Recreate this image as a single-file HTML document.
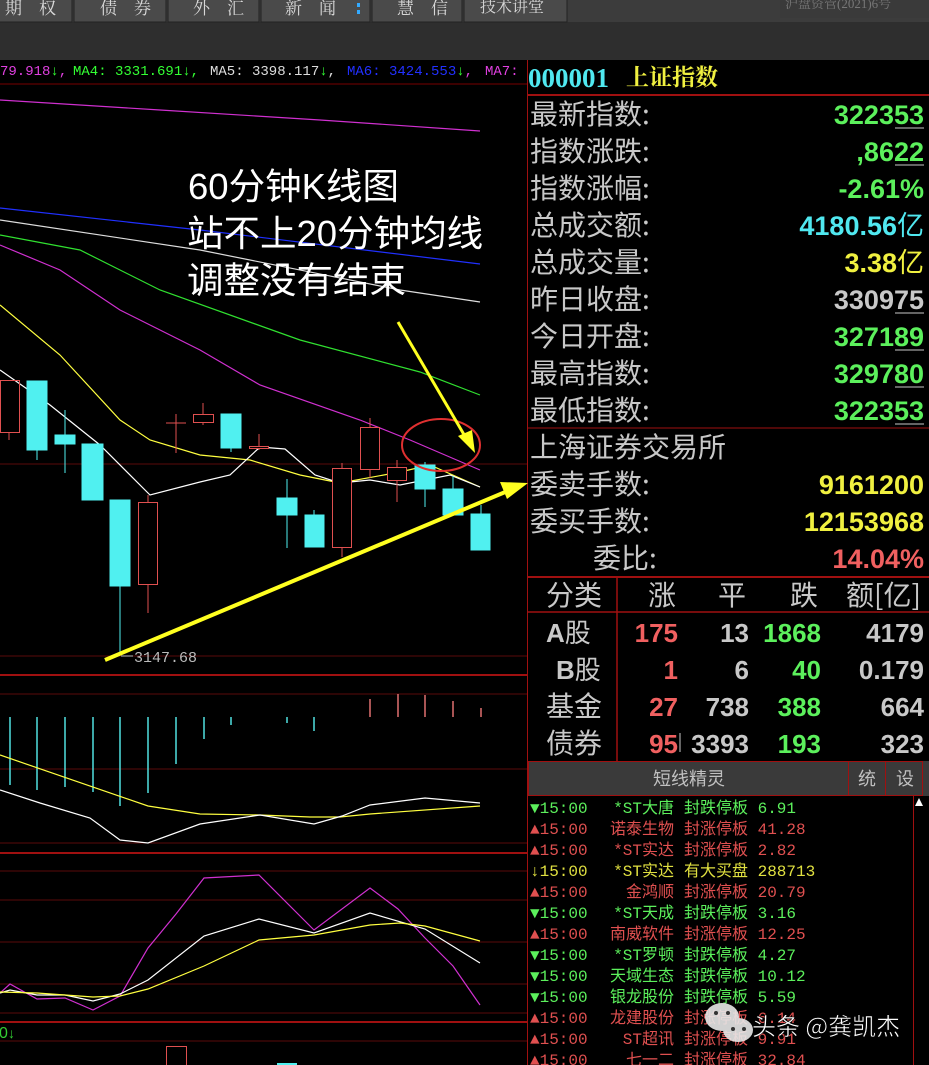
<!DOCTYPE html>
<html><head><meta charset="utf-8"><style>
html,body{margin:0;padding:0;background:#000;width:929px;height:1065px;overflow:hidden}
svg{display:block}
</style></head><body>
<svg width="929" height="1065" xmlns="http://www.w3.org/2000/svg" font-family="'Liberation Sans','WenQuanYi Zen Hei',sans-serif">
<rect width="929" height="1065" fill="#000"/>
<!-- top bar -->
<rect x="0" y="0" width="929" height="22" fill="#3c3c3c"/>
<rect x="0" y="22" width="929" height="38" fill="#2e2e2e"/>
<g fill="#4a4a4a" stroke="#222">
<rect x="-2" y="-2" width="74" height="24"/><rect x="74" y="-2" width="92" height="24"/><rect x="168" y="-2" width="91" height="24"/>
<rect x="261" y="-2" width="109" height="24"/><rect x="372" y="-2" width="90" height="24"/><rect x="464" y="-2" width="103" height="24"/>
</g>
<rect x="780" y="-2" width="149" height="20" fill="#3a3a3a"/>
<g fill="#d8d8d8" font-size="17" font-family="'Liberation Serif','Noto Serif CJK SC',serif">
<text x="5" y="14">期　权</text><text x="100" y="14">债　券</text><text x="193" y="14">外　汇</text>
<text x="285" y="14">新　闻</text><text x="397" y="14">慧　信</text><text x="480" y="12" font-size="16">技术讲堂</text>
<text x="785" y="8" font-size="13" fill="#777">沪盘资管(2021)6号</text>
</g>
<rect x="357" y="3" width="3" height="4" fill="#3af"/><rect x="357" y="10" width="3" height="4" fill="#3af"/>
<!-- MA legend -->
<g font-family="'Liberation Mono',monospace" font-size="14">
<text x="0" y="75" fill="#e040e0">79.918<tspan fill="#3f3">↓</tspan>,</text>
<text x="73" y="75" fill="#3f3">MA4: 3331.691↓,</text>
<text x="210" y="75" fill="#ddd">MA5: 3398.117<tspan fill="#3f3">↓</tspan>,</text>
<text x="347" y="75" fill="#2230ff">MA6: 3424.553<tspan fill="#3f3">↓</tspan><tspan fill="#e040e0">,</tspan></text>
<text x="485" y="75" fill="#e040e0">MA7:</text>
</g>
<line x1="0" y1="84" x2="528" y2="84" stroke="#700" />
<!-- grid lines -->
<g stroke="#5a0a0a" stroke-width="1">
<line x1="0" y1="464" x2="528" y2="464"/><line x1="0" y1="656" x2="528" y2="656"/>
<line x1="0" y1="694" x2="528" y2="694"/><line x1="0" y1="769" x2="528" y2="769"/><line x1="0" y1="843" x2="528" y2="843"/>
<line x1="0" y1="871" x2="528" y2="871"/><line x1="0" y1="900" x2="528" y2="900"/><line x1="0" y1="942" x2="528" y2="942"/>
<line x1="0" y1="984" x2="528" y2="984"/><line x1="0" y1="1013" x2="528" y2="1013"/><line x1="0" y1="1041" x2="528" y2="1041"/>
</g>
<g stroke="#a01010" stroke-width="2">
<line x1="0" y1="675" x2="528" y2="675"/><line x1="0" y1="853" x2="528" y2="853"/><line x1="0" y1="1022" x2="528" y2="1022"/>
</g>
<line x1="527.5" y1="60" x2="527.5" y2="1065" stroke="#a01010"/>
<!-- MA lines -->
<g fill="none" stroke-width="1.2">
<polyline stroke="#d030d0" points="0,100 160,110 320,120 480,131"/>
<polyline stroke="#2030ff" points="0,208 200,230 480,264"/>
<polyline stroke="#ddd" points="0,220 200,250 400,290 480,302"/>
<polyline stroke="#30e030" points="0,235 80,250 160,290 300,340 420,372 480,395"/>
<polyline stroke="#d030d0" points="0,245 60,270 120,310 200,350 260,385 360,420 410,440 480,470"/>
<polyline stroke="#ffff40" points="0,305 60,355 120,420 150,440 200,455 250,460 300,475 340,483 400,472 430,465 480,487"/>
<polyline stroke="#fff" points="0,370 50,405 100,445 150,495 200,482 230,475 260,447 285,449 315,475 340,483 370,480 400,485 450,475 480,487"/>
</g>
<!-- candles -->
<g stroke="#e05050" fill="none">
<line x1="9" y1="432" x2="9" y2="440"/><rect x="0.5" y="380.5" width="19" height="52"/>
<line x1="148" y1="495" x2="148" y2="613"/><rect x="138.5" y="502.5" width="19" height="82" fill="#000"/>
<line x1="176" y1="414" x2="176" y2="453"/><line x1="166" y1="423" x2="186" y2="423"/>
<line x1="203" y1="403" x2="203" y2="425"/><rect x="193.5" y="414.5" width="20" height="8" fill="#000"/>
<line x1="259" y1="434" x2="259" y2="450"/><rect x="249.5" y="446.5" width="19" height="2" fill="#000"/>
<line x1="342" y1="463" x2="342" y2="557"/><rect x="332.5" y="468.5" width="19" height="79" fill="#000"/>
<line x1="370" y1="418" x2="370" y2="478"/><rect x="360.5" y="427.5" width="19" height="42" fill="#000"/>
<line x1="397" y1="460" x2="397" y2="502"/><rect x="387.5" y="467.5" width="19" height="13" fill="#000"/>
</g>
<g stroke="#50f0f0" fill="#50f0f0">
<line x1="37" y1="381" x2="37" y2="460"/><rect x="27" y="381" width="20" height="69"/>
<line x1="65" y1="410" x2="65" y2="473"/><rect x="55" y="435" width="20" height="9"/>
<line x1="93" y1="444" x2="93" y2="500"/><rect x="82" y="444" width="21" height="56"/>
<line x1="120" y1="500" x2="120" y2="655"/><rect x="110" y="500" width="20" height="86"/>
<line x1="231" y1="414" x2="231" y2="452"/><rect x="221" y="414" width="20" height="34"/>
<line x1="287" y1="479" x2="287" y2="548"/><rect x="277" y="498" width="20" height="17"/>
<line x1="314" y1="510" x2="314" y2="547"/><rect x="305" y="515" width="19" height="32"/>
<line x1="425" y1="462" x2="425" y2="507"/><rect x="415" y="465" width="20" height="24"/>
<line x1="453" y1="476" x2="453" y2="515"/><rect x="443" y="489" width="20" height="26"/>
<line x1="481" y1="505" x2="481" y2="550"/><rect x="471" y="514" width="19" height="36"/>
</g>
<text x="134" y="662" fill="#bbb" font-size="15" font-family="'Liberation Mono',monospace">3147.68</text>
<line x1="121" y1="656" x2="133" y2="656" stroke="#bbb"/>
<!-- annotations -->
<ellipse cx="441" cy="445" rx="39" ry="26" fill="none" stroke="#e03030" stroke-width="2"/>
<line x1="398" y1="322" x2="466" y2="438" stroke="#ffff20" stroke-width="3"/>
<polygon points="475,453 458,436 472,430" fill="#ffff20"/>
<line x1="105" y1="660" x2="510" y2="490" stroke="#ffff20" stroke-width="4"/>
<polygon points="528,483 500,482 507,499" fill="#ffff20"/>
<g fill="#fff" font-size="36.5" font-family="'Liberation Sans','Noto Sans CJK SC',sans-serif">
<text x="188" y="199">60分钟K线图</text><text x="187" y="246">站不上20分钟均线</text><text x="187" y="293">调整没有结束</text>
</g>
<!-- MACD -->
<g stroke="#50e0e0" stroke-width="1.5">
<line x1="10" y1="717" x2="10" y2="785"/><line x1="37" y1="717" x2="37" y2="790"/><line x1="65" y1="717" x2="65" y2="787"/>
<line x1="93" y1="717" x2="93" y2="792"/><line x1="120" y1="717" x2="120" y2="806"/><line x1="148" y1="717" x2="148" y2="793"/>
<line x1="176" y1="717" x2="176" y2="764"/><line x1="204" y1="717" x2="204" y2="739"/><line x1="231" y1="717" x2="231" y2="725"/>
<line x1="287" y1="717" x2="287" y2="723"/><line x1="314" y1="717" x2="314" y2="731"/>
</g>
<g stroke="#e07070" stroke-width="1.5">
<line x1="370" y1="717" x2="370" y2="699"/><line x1="398" y1="717" x2="398" y2="694"/><line x1="425" y1="717" x2="425" y2="695"/>
<line x1="453" y1="717" x2="453" y2="701"/><line x1="481" y1="717" x2="481" y2="708"/>
</g>
<g fill="none" stroke-width="1.2">
<polyline stroke="#ffff40" points="0,755 148,806 200,814 260,815 310,817 340,817 370,814 480,806"/>
<polyline stroke="#fff" points="0,790 40,803 90,818 120,840 148,843 200,824 260,815 314,824 342,816 370,805 425,798 480,803"/>
<polyline stroke="#d030d0" points="0,993 10,984 37,999 65,998 93,1010 120,996 148,948 176,914 204,878 259,875 314,930 370,888 398,909 425,938 453,966 480,1005"/>
<polyline stroke="#fff" points="0,993 10,990 37,995 65,995 93,1001 120,994 148,980 204,936 259,919 314,933 370,913 425,929 480,963"/>
<polyline stroke="#ffff40" points="0,992 37,993 93,997 120,996 148,989 204,966 259,940 314,935 370,925 400,923 425,926 480,941"/>
</g>
<text x="-1" y="1038" fill="#3c3" font-size="16">0</text><text x="8" y="1038" fill="#3c3" font-size="14">↓</text>
<rect x="166.5" y="1046.5" width="20" height="20" fill="none" stroke="#e05050"/>
<rect x="277" y="1063" width="20" height="2" fill="#50f0f0"/>

<!-- RIGHT PANEL -->
<text x="528" y="87" fill="#50e8f0" font-size="27" font-weight="bold" font-family="'Liberation Serif',serif">000001</text>
<text x="626" y="85" fill="#f0f040" font-size="23" font-weight="bold" font-family="'Liberation Serif','Noto Serif CJK SC',serif">上证指数</text>
<line x1="528" y1="95" x2="929" y2="95" stroke="#a01010" stroke-width="2"/>
<g fill="#c8c8c8" font-size="28" font-family="'WenQuanYi Zen Hei','Noto Sans CJK SC',sans-serif">
<text x="530" y="124">最新指数:</text><text x="530" y="161">指数涨跌:</text><text x="530" y="198">指数涨幅:</text>
<text x="530" y="235">总成交额:</text><text x="530" y="272">总成交量:</text><text x="530" y="309">昨日收盘:</text>
<text x="530" y="346">今日开盘:</text><text x="530" y="383">最高指数:</text><text x="530" y="420">最低指数:</text>
<text x="530" y="457">上海证券交易所</text><text x="530" y="494">委卖手数:</text><text x="530" y="531">委买手数:</text>
<text x="593" y="568">委比:</text>
</g>
<line x1="528" y1="428" x2="929" y2="428" stroke="#a01010"/>
<g font-size="27" font-weight="bold" text-anchor="end" font-family="'Liberation Sans','WenQuanYi Zen Hei',sans-serif">
<text x="924" y="124" fill="#5cf05c">322353</text>
<text x="924" y="161" fill="#5cf05c">,8622</text>
<text x="924" y="198" fill="#5cf05c">-2.61%</text>
<text x="924" y="235" fill="#50e8f0">4180.56<tspan font-weight="normal">亿</tspan></text>
<text x="924" y="272" fill="#f0f040">3.38<tspan font-weight="normal">亿</tspan></text>
<text x="924" y="309" fill="#c8c8c8">330975</text>
<text x="924" y="346" fill="#5cf05c">327189</text>
<text x="924" y="383" fill="#5cf05c">329780</text>
<text x="924" y="420" fill="#5cf05c">322353</text>
<text x="924" y="494" fill="#f0f040">9161200</text>
<text x="924" y="531" fill="#f0f040">12153968</text>
<text x="924" y="568" fill="#f06060">14.04%</text>
</g>
<g stroke="#c8c8c8"><line x1="895" y1="128" x2="924" y2="128"/><line x1="895" y1="165" x2="924" y2="165"/><line x1="895" y1="313" x2="924" y2="313"/><line x1="895" y1="350" x2="924" y2="350"/><line x1="895" y1="387" x2="924" y2="387"/><line x1="895" y1="424" x2="924" y2="424"/></g>
<line x1="528" y1="577" x2="929" y2="577" stroke="#a01010" stroke-width="2"/>
<line x1="528" y1="612" x2="929" y2="612" stroke="#a01010" stroke-width="1.5"/>
<line x1="617" y1="577" x2="617" y2="761" stroke="#a01010" stroke-width="1.5"/>
<g fill="#c8c8c8" font-size="28" font-family="'WenQuanYi Zen Hei','Noto Sans CJK SC',sans-serif">
<text x="546" y="605">分类</text><text x="648" y="605">涨</text><text x="718" y="605">平</text><text x="790" y="605">跌</text><text x="846" y="605">额[亿]</text>
<text x="546" y="642" font-size="26"><tspan font-weight="bold" font-family="'Liberation Sans',sans-serif">A</tspan>股</text>
<text x="556" y="679" font-size="26"><tspan font-weight="bold" font-family="'Liberation Sans',sans-serif">B</tspan>股</text>
<text x="546" y="716">基金</text><text x="546" y="753">债券</text>
</g>
<g font-size="26" font-weight="bold" text-anchor="end">
<text x="678" y="642" fill="#f06060">175</text><text x="749" y="642" fill="#c8c8c8">13</text><text x="821" y="642" fill="#5cf05c">1868</text><text x="924" y="642" fill="#c8c8c8">4179</text>
<text x="678" y="679" fill="#f06060">1</text><text x="749" y="679" fill="#c8c8c8">6</text><text x="821" y="679" fill="#5cf05c">40</text><text x="924" y="679" fill="#c8c8c8">0.179</text>
<text x="678" y="716" fill="#f06060">27</text><text x="749" y="716" fill="#c8c8c8">738</text><text x="821" y="716" fill="#5cf05c">388</text><text x="924" y="716" fill="#c8c8c8">664</text>
<text x="678" y="753" fill="#f06060">95</text><text x="749" y="753" fill="#c8c8c8">3393</text><text x="821" y="753" fill="#5cf05c">193</text><text x="924" y="753" fill="#c8c8c8">323</text>
</g>
<line x1="680" y1="733" x2="680" y2="752" stroke="#c8c8c8"/>
<!-- 短线精灵 bar -->
<rect x="528" y="761" width="401" height="35" fill="#3a3a3a"/>
<g fill="none" stroke="#a01010"><rect x="528.5" y="761.5" width="320" height="34"/><rect x="848.5" y="761.5" width="37" height="34"/><rect x="885.5" y="761.5" width="37" height="34"/></g>
<g fill="#c0c0c0" font-size="18" font-family="'WenQuanYi Zen Hei','Noto Sans CJK SC',sans-serif">
<text x="653" y="785">短线精灵</text><text x="858" y="785">统</text><text x="896" y="785">设</text>
</g>
<line x1="913.5" y1="796" x2="913.5" y2="1065" stroke="#a01010"/>
<polygon points="919,798 915,806 923,806" fill="#fff"/>
<g font-size="16" font-family="'Liberation Mono','WenQuanYi Zen Hei',monospace">
<g fill="#5cf05c"><text x="530" y="813">▼15:00</text><text x="674" y="813" text-anchor="end">*ST大唐</text><text x="684" y="813">封跌停板 6.91</text></g>
<g fill="#e05050"><text x="530" y="834">▲15:00</text><text x="674" y="834" text-anchor="end">诺泰生物</text><text x="684" y="834">封涨停板 41.28</text></g>
<g fill="#e05050"><text x="530" y="855">▲15:00</text><text x="674" y="855" text-anchor="end">*ST实达</text><text x="684" y="855">封涨停板 2.82</text></g>
<g fill="#e0e040"><text x="530" y="876">↓15:00</text><text x="674" y="876" text-anchor="end">*ST实达</text><text x="684" y="876">有大买盘 288713</text></g>
<g fill="#e05050"><text x="530" y="897">▲15:00</text><text x="674" y="897" text-anchor="end">金鸿顺</text><text x="684" y="897">封涨停板 20.79</text></g>
<g fill="#5cf05c"><text x="530" y="918">▼15:00</text><text x="674" y="918" text-anchor="end">*ST天成</text><text x="684" y="918">封跌停板 3.16</text></g>
<g fill="#e05050"><text x="530" y="939">▲15:00</text><text x="674" y="939" text-anchor="end">南威软件</text><text x="684" y="939">封涨停板 12.25</text></g>
<g fill="#5cf05c"><text x="530" y="960">▼15:00</text><text x="674" y="960" text-anchor="end">*ST罗顿</text><text x="684" y="960">封跌停板 4.27</text></g>
<g fill="#5cf05c"><text x="530" y="981">▼15:00</text><text x="674" y="981" text-anchor="end">天域生态</text><text x="684" y="981">封跌停板 10.12</text></g>
<g fill="#5cf05c"><text x="530" y="1002">▼15:00</text><text x="674" y="1002" text-anchor="end">银龙股份</text><text x="684" y="1002">封跌停板 5.59</text></g>
<g fill="#e05050"><text x="530" y="1023">▲15:00</text><text x="674" y="1023" text-anchor="end">龙建股份</text><text x="684" y="1023">封涨停板 6.14</text></g>
<g fill="#e05050"><text x="530" y="1044">▲15:00</text><text x="674" y="1044" text-anchor="end">ST超讯</text><text x="684" y="1044">封涨停板 9.91</text></g>
<g fill="#e05050"><text x="530" y="1065">▲15:00</text><text x="674" y="1065" text-anchor="end">七一二</text><text x="684" y="1065">封涨停板 32.84</text></g>
</g>
<!-- watermark -->
<g fill="#e8e8e8" opacity="0.9">
<ellipse cx="722" cy="1017" rx="17" ry="14"/><ellipse cx="738" cy="1030" rx="15" ry="12"/>
</g>
<g fill="#333"><circle cx="716" cy="1013" r="2"/><circle cx="728" cy="1013" r="2"/><circle cx="733" cy="1029" r="2"/><circle cx="744" cy="1029" r="2"/></g>
<text x="752" y="1035" fill="#fff" font-size="24" font-family="'Noto Sans CJK SC',sans-serif" stroke="#000" stroke-width="0.5">头条 @龚凯杰</text>
</svg>
</body></html>
